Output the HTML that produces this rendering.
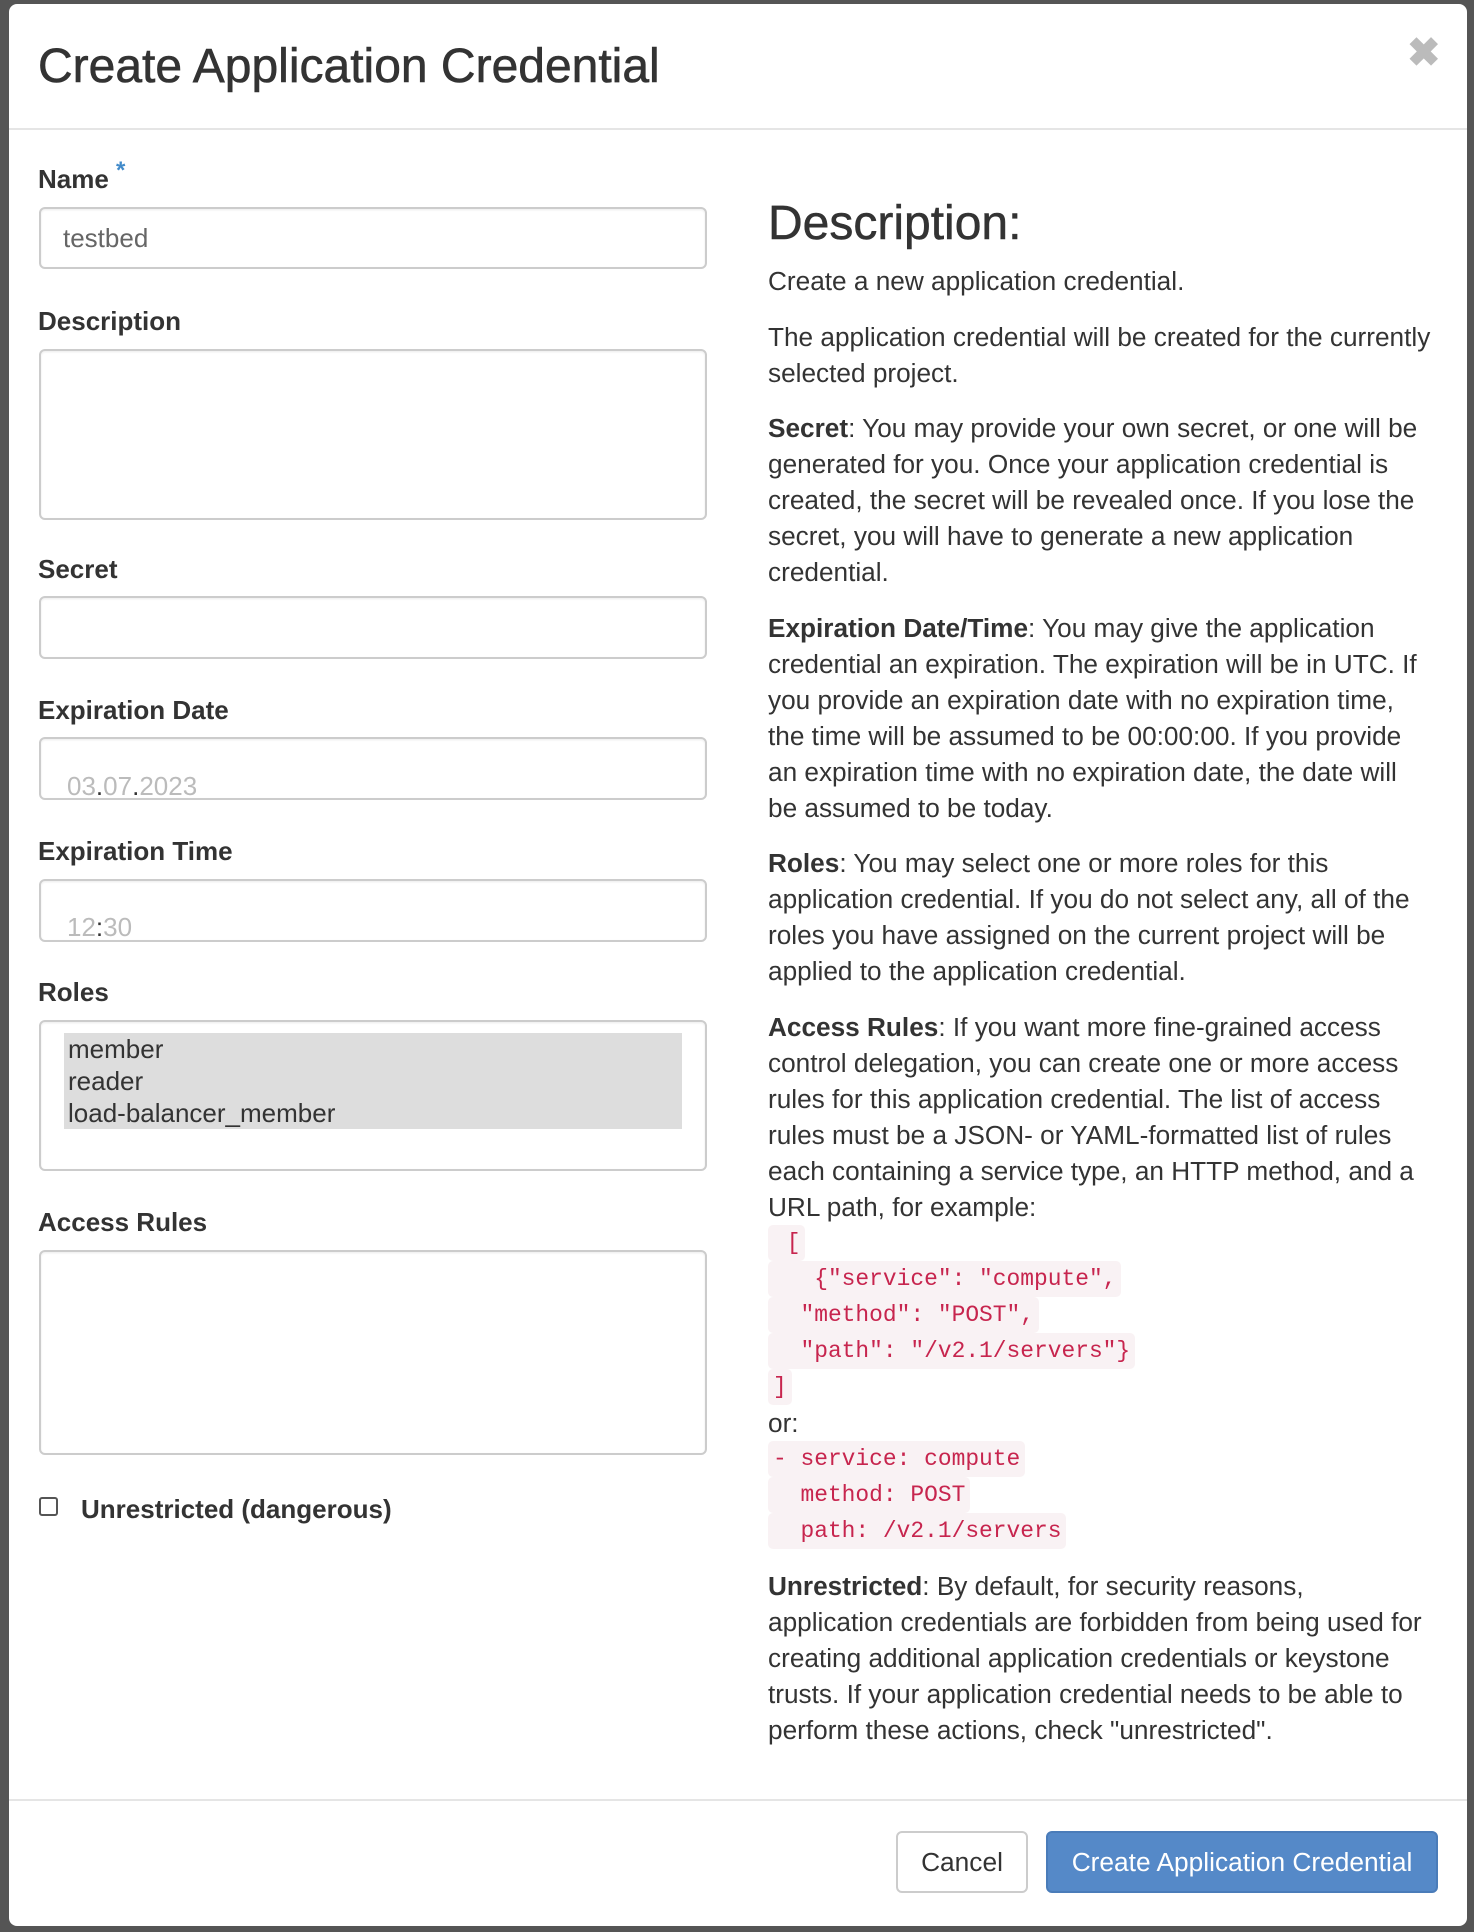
<!DOCTYPE html>
<html><head><meta charset="utf-8"><style>
*{box-sizing:border-box;margin:0;padding:0}
html,body{width:1474px;height:1932px;overflow:hidden;background:#555;font-family:"Liberation Sans",Arial,sans-serif;color:#333}
.modal{position:absolute;left:9px;top:4px;width:1458px;height:1922px;background:#fff;border-radius:8px;}
.a{position:absolute;white-space:nowrap}
h1{position:absolute;left:29px;top:35px;font-size:48px;font-weight:normal;color:#333;-webkit-text-stroke:0.6px #333}
.hr{position:absolute;left:0;width:100%;height:2px;background:#e5e5e5}
.lbl{position:absolute;left:29px;font-weight:bold;font-size:26px;white-space:nowrap}
.in{position:absolute;left:30px;width:668px;border:2px solid #ccc;border-radius:6px;box-shadow:inset 0 1px 2px rgba(0,0,0,.08)}
.ph{position:absolute;font-size:26px;white-space:nowrap}
.rt{position:absolute;left:759px;top:0;width:690px;font-size:26.2px;line-height:36px}
.rt p{margin-bottom:19.5px;white-space:nowrap}
code{font-family:"Liberation Mono",monospace;font-size:22.9px;color:#c7254e;background:#f9f2f4;display:inline-block;height:36px;line-height:36px;padding:0 5px;white-space:pre;border-radius:5px;vertical-align:top}
.btn{position:absolute;top:1827px;height:62px;border-radius:6px;font-size:26.3px;line-height:58px;text-align:center}
</style></head><body>
<div class="modal">
<h1>Create Application Credential</h1>
<div class="a" style="left:1398px;top:26px;font-size:40px;font-weight:bold;color:#bbb">✖</div>
<div class="hr" style="top:124px"></div>

<div class="lbl" style="top:160px">Name <span style="color:#428bca;font-size:24px;position:relative;top:-10px">*</span></div>
<div class="in" style="top:203px;height:62px"></div>
<div class="ph" style="left:54px;top:219px;color:#666">testbed</div>

<div class="lbl" style="top:302px">Description</div>
<div class="in" style="top:345px;height:171px"></div>

<div class="lbl" style="top:550px">Secret</div>
<div class="in" style="top:592px;height:63px"></div>

<div class="lbl" style="top:691px">Expiration Date</div>
<div class="in" style="top:733px;height:63px"></div>
<div class="ph" style="left:58px;top:767px;color:#bbb">03<span style="color:#333">.</span>07<span style="color:#333">.</span>2023</div>

<div class="lbl" style="top:832px">Expiration Time</div>
<div class="in" style="top:875px;height:63px"></div>
<div class="ph" style="left:58px;top:908px;color:#bbb">12<span style="color:#333">:</span>30</div>

<div class="lbl" style="top:973px">Roles</div>
<div class="in" style="top:1016px;height:151px"></div>
<div class="a" style="left:55px;top:1029px;width:618px;height:96px;background:#ddd;font-size:26px;line-height:32px;padding-left:4px">member<br>reader<br>load-balancer_member</div>

<div class="lbl" style="top:1203px">Access Rules</div>
<div class="in" style="top:1246px;height:205px"></div>

<div class="a" style="left:30px;top:1493px;width:19px;height:19px;border:2px solid #555;border-radius:3px"></div>
<div class="lbl" style="left:72px;top:1490px">Unrestricted (dangerous)</div>

<div class="rt" style="top:190px">
<div style="font-size:48px;font-weight:normal;line-height:60px;margin-bottom:9px;-webkit-text-stroke:0.5px #333">Description:</div>
<p>Create a new application credential.</p>
<p>The application credential will be created for the currently<br>selected project.</p>
<p><b>Secret</b>: You may provide your own secret, or one will be<br>generated for you. Once your application credential is<br>created, the secret will be revealed once. If you lose the<br>secret, you will have to generate a new application<br>credential.</p>
<p><b>Expiration Date/Time</b>: You may give the application<br>credential an expiration. The expiration will be in UTC. If<br>you provide an expiration date with no expiration time,<br>the time will be assumed to be 00:00:00. If you provide<br>an expiration time with no expiration date, the date will<br>be assumed to be today.</p>
<p><b>Roles</b>: You may select one or more roles for this<br>application credential. If you do not select any, all of the<br>roles you have assigned on the current project will be<br>applied to the application credential.</p>
<p style="margin-bottom:0"><b>Access Rules</b>: If you want more fine-grained access<br>control delegation, you can create one or more access<br>rules for this application credential. The list of access<br>rules must be a JSON- or YAML-formatted list of rules<br>each containing a service type, an HTTP method, and a<br>URL path, for example:</p>
<div><code> [</code></div>
<div><code>   {"service": "compute",</code></div>
<div><code>  "method": "POST",</code></div>
<div><code>  "path": "/v2.1/servers"}</code></div>
<div><code>]</code></div>
<div>or:</div>
<div><code>- service: compute</code></div>
<div><code>  method: POST</code></div>
<div style="margin-bottom:19.5px"><code>  path: /v2.1/servers</code></div>
<p><b>Unrestricted</b>: By default, for security reasons,<br>application credentials are forbidden from being used for<br>creating additional application credentials or keystone<br>trusts. If your application credential needs to be able to<br>perform these actions, check "unrestricted".</p>
</div>

<div class="hr" style="top:1795px"></div>
<div class="btn" style="left:887px;width:132px;border:2px solid #ccc;background:#fff;color:#333">Cancel</div>
<div class="btn" style="left:1037px;width:392px;background:#5589c8;border:2px solid #4a7cb9;color:#fff">Create Application Credential</div>
</div>
</body></html>
